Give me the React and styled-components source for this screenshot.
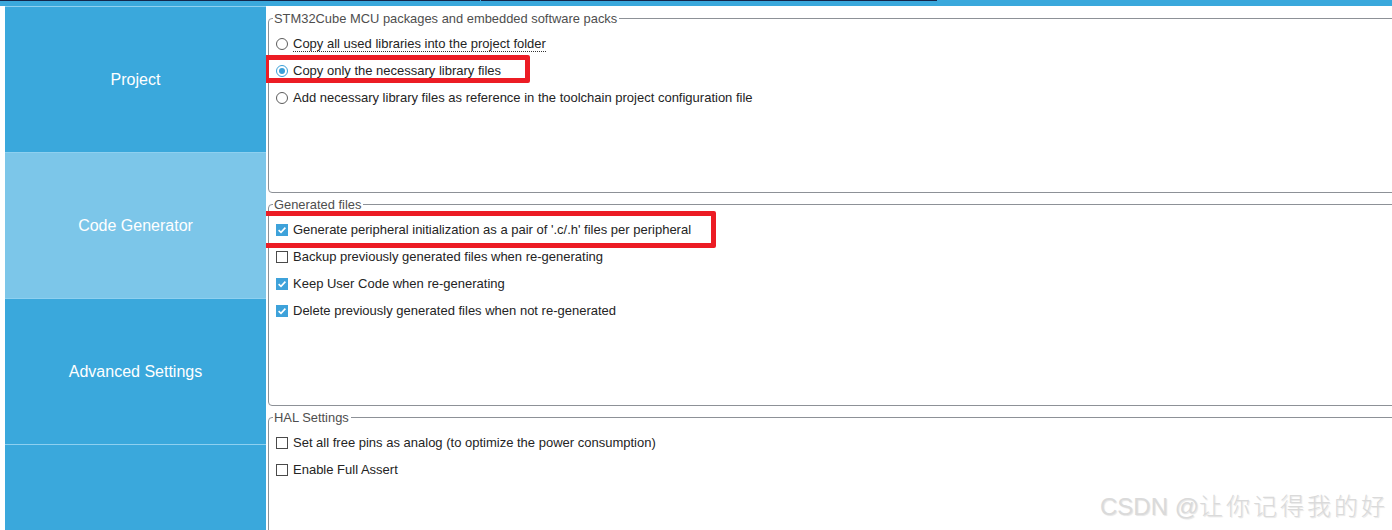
import React from 'react'
import styled, { createGlobalStyle } from 'styled-components'

const GlobalStyle = createGlobalStyle`
  html, body {
    margin: 0;
    padding: 0;
    background: #fff;
  }
  body {
    font-family: "Liberation Sans", Arial, sans-serif;
  }
`

const Page = styled.div`
  position: relative;
  width: 1392px;
  height: 530px;
  overflow: hidden;
  background: #fff;
`

const TopBar = styled.div`
  display: flex;
  align-items: flex-start;
  gap: 1px;
  height: 6px;
  background: #3aa8dc;
`

const TabEdge = styled.div`
  width: ${(p) => p.$w}px;
  height: 1px;
  background: #14264a;
`

const Body = styled.div`
  display: flex;
  padding-left: 5px;
`

const Sidebar = styled.nav`
  display: flex;
  flex-direction: column;
  width: 261px;
  flex-shrink: 0;
`

const NavItem = styled.div`
  display: flex;
  align-items: center;
  justify-content: center;
  height: 145px;
  border-top: 1px solid #8ed0f0;
  background: ${(p) => (p.$active ? '#7cc6e9' : '#3aa8dc')};
  color: #fff;
  font-size: 16px;
`

const Content = styled.main`
  flex: 1;
  min-width: 0;
  overflow: hidden;
  padding: 12px 0 0 2px;
  display: flex;
  flex-direction: column;
  gap: 11px;
`

const Group = styled.section`
  position: relative;
  box-sizing: border-box;
  height: ${(p) => p.$h}px;
  margin-right: -12px;
  border: 1px solid #8d9197;
  border-radius: 4px;
`

const Legend = styled.span`
  position: absolute;
  top: -8px;
  left: 4px;
  padding: 0 2px 0 1px;
  background: #fff;
  color: #4e4e4e;
  font-size: 12.9px;
  line-height: 15px;
`

const Options = styled.div`
  display: flex;
  flex-direction: column;
  padding: 11px 0 0 7px;
`

const Row = styled.label`
  position: relative;
  display: flex;
  align-items: center;
  gap: 5px;
  height: 27px;
  color: #242424;
  font-size: 13px;
`

const Label = styled.span`
  display: inline-block;
  line-height: 14px;
  padding-top: 2px;
  border-bottom: 1px dotted ${(p) => (p.$focus ? '#333' : 'transparent')};
`

const Radio = styled.span`
  box-sizing: border-box;
  display: flex;
  align-items: center;
  justify-content: center;
  width: 12px;
  height: 12px;
  border-radius: 50%;
  border: 1px solid ${(p) => (p.$on ? '#3a9fd8' : '#5c5c5c')};
  background: #fff;

  &::after {
    content: '';
    width: 6px;
    height: 6px;
    border-radius: 50%;
    background: ${(p) => (p.$on ? '#3a9fd8' : 'transparent')};
  }
`

const Box = styled.span`
  box-sizing: border-box;
  display: flex;
  align-items: center;
  justify-content: center;
  width: 12px;
  height: 12px;
  border: 1px solid ${(p) => (p.$on ? '#3ea2da' : '#4a4a4a')};
  background: ${(p) => (p.$on ? '#3ea2da' : '#fff')};
`

const Highlight = styled.span`
  position: absolute;
  left: ${(p) => p.$x}px;
  top: ${(p) => p.$y}px;
  width: ${(p) => p.$w}px;
  height: ${(p) => p.$h}px;
  box-sizing: border-box;
  border: 5px solid #ec1c24;
  border-radius: 2px;
  pointer-events: none;
`

const Watermark = styled.div`
  position: absolute;
  right: 4px;
  bottom: 8px;
  font-family: "Liberation Sans", "Noto Sans CJK SC", sans-serif;
  font-size: 24px;
  line-height: 30px;
  color: #dadada;
  text-shadow: 1px 1px 1px rgba(0, 0, 0, 0.1);

  span {
    font-weight: 300;
    letter-spacing: 3px;
  }
`

const Check = () => (
  <svg width="10" height="10" viewBox="0 0 10 10">
    <path d="M1.6 5.2 L4 7.4 L8.4 2.6" fill="none" stroke="#fff" strokeWidth="1.6" />
  </svg>
)

const RadioRow = ({ on, focus, children, mark }) => (
  <Row>
    <Radio $on={on} />
    <Label $focus={focus}>{children}</Label>
    {mark && <Highlight {...mark} />}
  </Row>
)

const CheckRow = ({ on, children, mark }) => (
  <Row>
    <Box $on={on}>{on && <Check />}</Box>
    <Label>{children}</Label>
    {mark && <Highlight {...mark} />}
  </Row>
)

const App = () => (
  <Page>
    <GlobalStyle />
    <TopBar>
      <TabEdge $w={480} />
      <TabEdge $w={456} />
    </TopBar>
    <Body>
      <Sidebar>
        <NavItem>Project</NavItem>
        <NavItem $active>Code Generator</NavItem>
        <NavItem>Advanced Settings</NavItem>
        <NavItem />
      </Sidebar>
      <Content>
        <Group $h={175}>
          <Legend>STM32Cube MCU packages and embedded software packs</Legend>
          <Options>
            <RadioRow focus>Copy all used libraries into the project folder</RadioRow>
            <RadioRow on mark={{ $x: -12, $y: -2, $w: 266, $h: 28 }}>
              Copy only the necessary library files
            </RadioRow>
            <RadioRow>
              Add necessary library files as reference in the toolchain project configuration file
            </RadioRow>
          </Options>
        </Group>
        <Group $h={202}>
          <Legend>Generated files</Legend>
          <Options>
            <CheckRow on mark={{ $x: -15, $y: -5, $w: 455, $h: 37 }}>
              Generate peripheral initialization as a pair of '.c/.h' files per peripheral
            </CheckRow>
            <CheckRow>Backup previously generated files when re-generating</CheckRow>
            <CheckRow on>Keep User Code when re-generating</CheckRow>
            <CheckRow on>Delete previously generated files when not re-generated</CheckRow>
          </Options>
        </Group>
        <Group $h={200}>
          <Legend>HAL Settings</Legend>
          <Options>
            <CheckRow>Set all free pins as analog (to optimize the power consumption)</CheckRow>
            <CheckRow>Enable Full Assert</CheckRow>
          </Options>
        </Group>
      </Content>
    </Body>
    <Watermark>
      CSDN @<span>让你记得我的好</span>
    </Watermark>
  </Page>
)

export default App
